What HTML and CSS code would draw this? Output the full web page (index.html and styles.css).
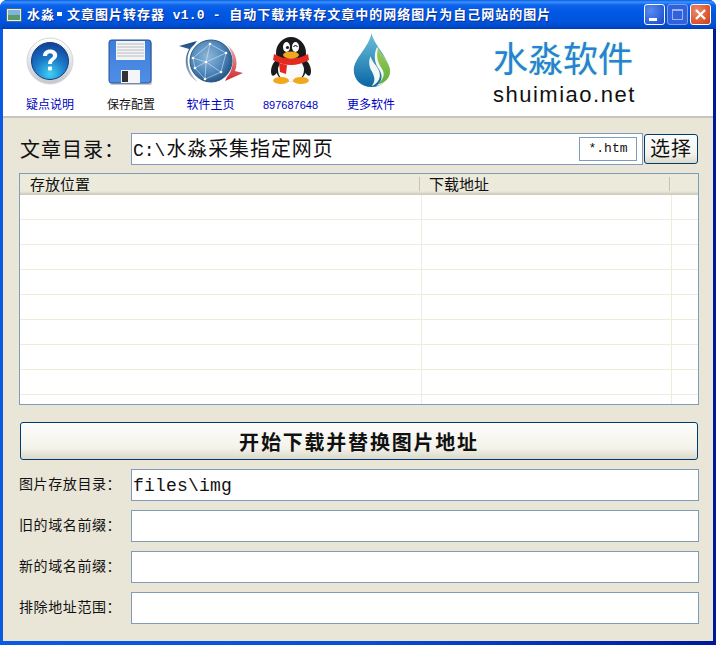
FILE: index.html
```html
<!DOCTYPE html>
<html lang="zh-CN">

<head>
  <meta charset="UTF-8" />
  <title>水淼·文章图片转存器</title>
  <link rel="stylesheet" href="styles.css">
</head>

<body>

  <div class="window">

    <header class="titlebar">
      <svg class="app-icon" width="16" height="16" viewBox="0 0 16 16">
        <rect x="0.5" y="1.5" width="15" height="13" fill="#e8eef0" stroke="#4a6a80" />
        <rect x="2" y="3" width="12" height="5" fill="#7fb6d8" />
        <rect x="2" y="8" width="12" height="5" fill="#5a9a6a" />
      </svg>
      <h1 class="title">水淼<span class="dot"></span>文章图片转存器 <span class="mono">v1.0 -</span> 自动下载并转存文章中的网络图片为自己网站的图片</h1>
      <div class="win-buttons">
        <span class="win-btn">
          <svg width="21" height="21" viewBox="0 0 21 21"><rect x="5" y="14" width="8" height="3" fill="#fff" /></svg>
        </span>
        <span class="win-btn win-btn-off">
          <svg width="21" height="21" viewBox="0 0 21 21"><rect x="5.5" y="5.5" width="10" height="10" fill="none" stroke="#9db4ea" /><rect x="5" y="5" width="11" height="2" fill="#9db4ea" /></svg>
        </span>
        <span class="win-btn win-btn-close">
          <svg width="21" height="21" viewBox="0 0 21 21"><path d="M6 6l9 9M15 6l-9 9" stroke="#fff" stroke-width="2.4" /></svg>
        </span>
      </div>
    </header>

    <div class="client">

      <nav class="toolbar">
        <a class="tool tool-help">
          <svg width="50" height="50" viewBox="0 0 50 50">
            <defs>
              <radialGradient id="helpBlue" cx="50%" cy="85%" r="80%">
                <stop offset="0" stop-color="#3fd0f2" />
                <stop offset="0.55" stop-color="#1a78c8" />
                <stop offset="1" stop-color="#12459a" />
              </radialGradient>
              <linearGradient id="helpRing" x1="0" y1="0" x2="0" y2="1">
                <stop offset="0" stop-color="#ffffff" />
                <stop offset="1" stop-color="#c4c8cc" />
              </linearGradient>
            </defs>
            <circle cx="25" cy="25" r="23" fill="url(#helpRing)" stroke="#d4d6d8" />
            <circle cx="25" cy="25" r="18.500" fill="url(#helpBlue)" stroke="#0f3f88" />
            <path d="M18 20c0-4 3-6.500 7.200-6.500 4.300 0 7 2.500 7 5.800 0 4.700-5.200 4.700-5.200 8.700h-4c0-5.500 5-5.700 5-8.500 0-1.300-1.100-2.300-2.800-2.300-1.800 0-3 1-3.200 2.800z" fill="#fff" />
            <rect x="23" y="30.500" width="4" height="4" rx="1" fill="#fff" />
          </svg>
          <span>疑点说明</span>
        </a>
        <a class="tool tool-save">
          <svg width="50" height="50" viewBox="0 0 50 50">
            <defs>
              <linearGradient id="diskBlue" x1="0" y1="0" x2="0" y2="1">
                <stop offset="0" stop-color="#3d7fd8" />
                <stop offset="1" stop-color="#4f8ee6" />
              </linearGradient>
            </defs>
            <rect x="4" y="6" width="42" height="43" rx="2" fill="#8a8f98" opacity="0.5" />
            <rect x="3" y="4" width="42" height="43" rx="2.500" fill="url(#diskBlue)" stroke="#244f96" />
            <rect x="10" y="5" width="29" height="19" fill="#f4f4f4" />
            <path d="M11 8h27M11 11h27M11 14h27M11 17h27M11 20h27" stroke="#b8bcc2" />
            <rect x="15" y="34" width="19" height="13" fill="#f4f5f8" />
            <rect x="16" y="35" width="6" height="11" fill="#333" />
          </svg>
          <span class="tool-black">保存配置</span>
        </a>
        <a class="tool tool-home">
          <svg width="64" height="50" viewBox="0 0 64 50">
            <defs>
              <radialGradient id="globe" cx="42%" cy="40%" r="65%">
                <stop offset="0" stop-color="#8fb8d8" />
                <stop offset="0.6" stop-color="#4f88bc" />
                <stop offset="1" stop-color="#1c4c80" />
              </radialGradient>
              <linearGradient id="arcBlue" x1="0" y1="0" x2="0" y2="1">
                <stop offset="0" stop-color="#154a86" />
                <stop offset="1" stop-color="#b8bec4" />
              </linearGradient>
              <linearGradient id="arcRed" x1="0" y1="0" x2="0" y2="1">
                <stop offset="0" stop-color="#e8b8b8" />
                <stop offset="1" stop-color="#d02830" />
              </linearGradient>
            </defs>
            <path d="M0 10L18 5L15 9C6 16 6 34 19 46C8 40 3 26 10 13z" fill="url(#arcBlue)" />
            <path d="M48 9C56 14 60 26 56 35L64 37L46 45L48 41C55 34 56 18 48 9z" fill="url(#arcRed)" />
            <circle cx="32" cy="25" r="21" fill="url(#globe)" stroke="#2c5880" />
            <path d="M14 22L31 8L47 17L42 36L26 43L16 32zM31 8L27 26L42 36M14 22L27 26L47 17M16 32L27 26L26 43" fill="none" stroke="#dce8f4" stroke-width="0.6" />
            <g fill="#fff"><circle cx="31" cy="8" r="1.300" /><circle cx="47" cy="17" r="1.300" /><circle cx="14" cy="22" r="1.300" /><circle cx="42" cy="36" r="1.300" /><circle cx="26" cy="43" r="1.300" /><circle cx="16" cy="32" r="1.300" /><circle cx="27" cy="26" r="1.300" /></g>
          </svg>
          <span>软件主页</span>
        </a>
        <a class="tool tool-qq">
          <svg width="46" height="50" viewBox="0 0 46 50">
            <ellipse cx="7" cy="32" rx="3.500" ry="8" fill="#1c1c1c" transform="rotate(16 7 32)" />
            <ellipse cx="39" cy="32" rx="3.500" ry="8" fill="#1c1c1c" transform="rotate(-16 39 32)" />
            <ellipse cx="23" cy="17" rx="15" ry="16" fill="#1a1a1e" />
            <ellipse cx="23" cy="32" rx="15.500" ry="14" fill="#1a1a1e" />
            <ellipse cx="23" cy="34" rx="13" ry="12" fill="#fafafa" />
            <ellipse cx="18.500" cy="11" rx="3.500" ry="5" fill="#fff" />
            <ellipse cx="27.500" cy="11" rx="3.500" ry="5" fill="#fff" />
            <circle cx="19.500" cy="11.500" r="1.600" fill="#222" />
            <path d="M25.500 11q2-3 4 0" fill="none" stroke="#222" stroke-width="1.200" />
            <ellipse cx="23" cy="19" rx="8" ry="3.500" fill="#f2a81c" />
            <path d="M6 18q17 9 34 0l1 6q-18 10-36 0z" fill="#e42a1e" />
            <path d="M11 27l8 2l-1 9l-6-2z" fill="#e42a1e" />
            <ellipse cx="13" cy="44.500" rx="8" ry="3.500" fill="#f2a81c" />
            <ellipse cx="33" cy="44.500" rx="8" ry="3.500" fill="#f2a81c" />
          </svg>
          <span>897687648</span>
        </a>
        <a class="tool tool-more">
          <svg width="41" height="56" viewBox="0 0 44 60">
            <defs>
              <linearGradient id="dropBlue" x1="0" y1="0" x2="0" y2="1">
                <stop offset="0" stop-color="#6cc0dc" />
                <stop offset="1" stop-color="#0a66a4" />
              </linearGradient>
              <linearGradient id="dropGreen" x1="0" y1="0" x2="0" y2="1">
                <stop offset="0" stop-color="#9ccc58" />
                <stop offset="1" stop-color="#62ae3c" />
              </linearGradient>
            </defs>
            <path d="M22 1C25 15 41 27 41 42C41 52 32 59 22 59C11 59 3 51 3 41C3 28 19 17 22 1z" fill="url(#dropBlue)" />
            <path d="M28 16C33 26 42 32 42 42C42 51 34 57 27 58C33 54 35 47 30 40C25 33 24 24 28 16z" fill="#f4f8f2" />
            <path d="M29 17C34 27 42 33 42 42C42 50 35 55 29 56C35 50 37 45 33 39C28 32 27 24 29 17z" fill="url(#dropGreen)" />
            <path d="M21 26C23 34 31 38 31 46C31 52 27 56 22 58C28 52 24 45 21 40C19 35 19 30 21 26z" fill="#f4f8f2" />
          </svg>
          <span>更多软件</span>
        </a>
        <div class="brand">
          <strong class="brand-cn">水淼软件</strong>
          <span class="brand-en">shuimiao.net</span>
        </div>
      </nav>

      <main class="panel">

        <div class="dir-row">
          <label class="dir-label">文章目录：</label>
          <div class="field dir-field">
            <span class="dir-value">C:\<span class="dir-cjk">水淼采集指定网页</span></span>
            <span class="filter">*.htm</span>
          </div>
          <button class="btn btn-pick">选择</button>
        </div>

        <div class="table">
          <div class="table-head">
            <span class="col col-a">存放位置</span>
            <span class="col col-b">下载地址</span>
            <span class="col col-c"></span>
          </div>
          <div class="table-body">
            <div class="table-row"><i class="cell cell-a"></i><i class="cell cell-b"></i><i class="cell"></i></div>
            <div class="table-row"><i class="cell cell-a"></i><i class="cell cell-b"></i><i class="cell"></i></div>
            <div class="table-row"><i class="cell cell-a"></i><i class="cell cell-b"></i><i class="cell"></i></div>
            <div class="table-row"><i class="cell cell-a"></i><i class="cell cell-b"></i><i class="cell"></i></div>
            <div class="table-row"><i class="cell cell-a"></i><i class="cell cell-b"></i><i class="cell"></i></div>
            <div class="table-row"><i class="cell cell-a"></i><i class="cell cell-b"></i><i class="cell"></i></div>
            <div class="table-row"><i class="cell cell-a"></i><i class="cell cell-b"></i><i class="cell"></i></div>
            <div class="table-row"><i class="cell cell-a"></i><i class="cell cell-b"></i><i class="cell"></i></div>
            <div class="table-row table-row-last"><i class="cell cell-a"></i><i class="cell cell-b"></i><i class="cell"></i></div>
          </div>
        </div>

        <button class="btn btn-start">开始下载并替换图片地址</button>

        <div class="form-row">
          <label class="form-label">图片存放目录：</label>
          <div class="field form-field"><span class="form-value">files\img</span></div>
        </div>
        <div class="form-row">
          <label class="form-label">旧的域名前缀：</label>
          <div class="field form-field"></div>
        </div>
        <div class="form-row">
          <label class="form-label">新的域名前缀：</label>
          <div class="field form-field"></div>
        </div>
        <div class="form-row">
          <label class="form-label">排除地址范围：</label>
          <div class="field form-field"></div>
        </div>

      </main>
    </div>
  </div>

</body>

</html>
```

FILE: styles.css
```css
* {
  box-sizing: border-box;
  margin: 0;
  padding: 0;
}
:root {
  --face: #e9e6d8;
  --edge: #7f9db9;
  --cjk: "Liberation Sans", "Noto Sans CJK SC", sans-serif;
  --mono: "Liberation Mono", "Noto Sans CJK SC", monospace;
}
html,
body {
  width: 716px;
  height: 645px;
  overflow: hidden;
  background: #fff;
}
body {
  font-family: var(--cjk);
}

.window {
  display: flex;
  flex-direction: column;
  width: 716px;
  height: 645px;
  border-radius: 7px 7px 0 0;
  overflow: hidden;
  background: linear-gradient(to right, #0a5ae4 0, #0a4fd4 50%, #00189a 100%);
}

/* Title bar */
.titlebar {
  display: flex;
  align-items: center;
  flex: 0 0 29px;
  padding: 0 5px 0 6px;
  background: linear-gradient(to bottom, #0a5be0 0, #3a93ff 2px, #0f62ea 5px, #0058e4 12px, #0054dc 22px, #0048c8 27px, #003cb0 29px);
}
.app-icon {
  flex: none;
  margin-right: 5px;
}
.title {
  flex: 1;
  display: block;
  padding-top: 2px;
  color: #fff;
  font: bold 13px/16px var(--cjk);
  letter-spacing: 1px;
  white-space: nowrap;
  text-shadow: 1px 1px 0 #0f2f90;
}
.dot {
  display: inline-block;
  width: 5px;
  height: 4px;
  margin: 0 5px 3px 2px;
  background: #fff;
}
.mono {
  font-family: var(--mono);
  letter-spacing: 0.200px;
  margin: 0 4px 0 3px;
}
.win-buttons {
  display: flex;
  gap: 2px;
}
.win-btn {
  display: block;
  width: 21px;
  height: 21px;
  border: 1px solid #fff;
  border-radius: 3px;
  background: radial-gradient(circle at 30% 30%, #5a8cf0, #2a5cd8 70%, #1d48c0);
  overflow: hidden;
}
.win-btn svg {
  display: block;
  margin: -1px;
}
.win-btn-off {
  border-color: #7f9ee8;
  background: #2f62dc;
}
.win-btn-close {
  background: radial-gradient(circle at 30% 30%, #ec8a68, #d8532c 70%, #bf3d18);
}

/* Client area */
.client {
  flex: 1;
  display: flex;
  flex-direction: column;
  margin: 0 3px 4px;
  background: var(--face);
}
.toolbar {
  display: flex;
  flex: 0 0 89px;
  background: #fff;
  border-bottom: 2px solid #c8c6ba;
}
.tool {
  display: flex;
  flex-direction: column;
  align-items: center;
  height: 84px;
  padding-top: 7px;
  color: #0000c0;
  font-size: 12px;
  line-height: 15px;
  white-space: nowrap;
}
.tool svg {
  display: block;
}
.tool span {
  display: block;
  margin-top: auto;
}
.tool-black {
  color: #111;
}
.tool-help {
  width: 80px;
  margin-left: 7px;
}
.tool-save {
  width: 80px;
  margin-left: 1px;
}
.tool-home {
  width: 79px;
}
.tool-qq {
  width: 81px;
}
.tool-qq span {
  font-size: 11px;
}
.tool-more {
  width: 80px;
  padding-top: 3px;
}
.brand {
  display: flex;
  flex-direction: column;
  margin-left: 82px;
  padding-top: 6px;
}
.brand-cn {
  color: #2a80d8;
  font: normal 35px/44px "Noto Sans CJK SC", sans-serif;
  text-shadow: 0 0 2px #a8f0a0;
}
.brand-en {
  margin-top: 5px;
  color: #111;
  font: 22px/22px "Liberation Sans", sans-serif;
  letter-spacing: 1.500px;
}

.panel {
  flex: 1;
  display: flex;
  flex-direction: column;
  padding: 15px 14px 0 16px;
}
.field {
  background: #fff;
  border: 1px solid var(--edge);
}

/* Directory row */
.dir-row {
  display: flex;
  align-items: center;
  height: 32px;
}
.dir-label {
  flex: 0 0 112px;
  padding: 0 0 2px 1px;
  color: #111;
  font-size: 20px;
  white-space: nowrap;
  letter-spacing: 1px;
}
.dir-field {
  flex: 0 0 512px;
  height: 32px;
  display: flex;
  align-items: center;
  justify-content: space-between;
  padding: 0 5px 0 1px;
}
.dir-value {
  padding-top: 4px;
  font: 18px/26px var(--mono);
  color: #111;
  white-space: nowrap;
}
.dir-cjk {
  margin-left: 1px;
  font-size: 20px;
  letter-spacing: 0.900px;
}
.filter {
  width: 58px;
  height: 24px;
  border: 1px solid var(--edge);
  font: 13px/22px var(--mono);
  text-align: center;
  color: #111;
}
.btn {
  font-family: var(--cjk);
  color: #111;
  background: linear-gradient(to bottom, #fdfdfb 0, #f3f2ea 70%, #dcd8c8 100%);
  border: 1px solid #003c74;
  border-radius: 3px;
}
.btn-pick {
  flex: 0 0 54px;
  height: 30px;
  margin-left: 1px;
  font-size: 20px;
  line-height: 26px;
  letter-spacing: 1px;
}

/* List view */
.table {
  display: flex;
  flex-direction: column;
  height: 232px;
  width: 680px;
  margin-top: 8px;
  background: #fff;
  border: 1px solid var(--edge);
  overflow: hidden;
}
.table-head {
  display: flex;
  flex: 0 0 21px;
  background: linear-gradient(to bottom, #ebeadb 0, #ebeadb 17px, #cbc7b8 21px);
  color: #111;
  font-size: 15px;
}
.col {
  padding-left: 10px;
  border-right: 1px solid #c7c5b2;
  height: 14px;
  margin-top: 3px;
  line-height: 15px;
}
.col-a {
  flex: 0 0 400px;
}
.col-b {
  flex: 0 0 250px;
  padding-left: 9px;
}
.col-c {
  border: 0;
}
.table-body {
  flex: 1;
  overflow: hidden;
}
.table-row {
  display: flex;
  height: 25px;
  border-bottom: 1px solid #efecdc;
}
.cell {
  display: block;
  height: 100%;
}
.cell-a {
  flex: 0 0 402px;
  border-right: 1px solid #efecdc;
}
.cell-b {
  flex: 0 0 250px;
  border-right: 1px solid #efecdc;
}

/* Start button and form */
.btn-start {
  width: 678px;
  height: 38px;
  margin: 17px 0 0 1px;
  flex: none;
  font-size: 20px;
  font-weight: bold;
  letter-spacing: 1.800px;
}
.form-row {
  display: flex;
  align-items: center;
  height: 32px;
  margin-top: 9px;
}
.form-label {
  flex: 0 0 112px;
  padding-bottom: 4px;
  color: #111;
  font-size: 14px;
  letter-spacing: 0.600px;
  white-space: nowrap;
}
.form-field {
  flex: 0 0 568px;
  height: 32px;
  padding-left: 1px;
}
.form-value {
  display: block;
  padding-top: 1px;
  font: 18px/30px var(--mono);
  letter-spacing: 0.200px;
  color: #111;
}
```
